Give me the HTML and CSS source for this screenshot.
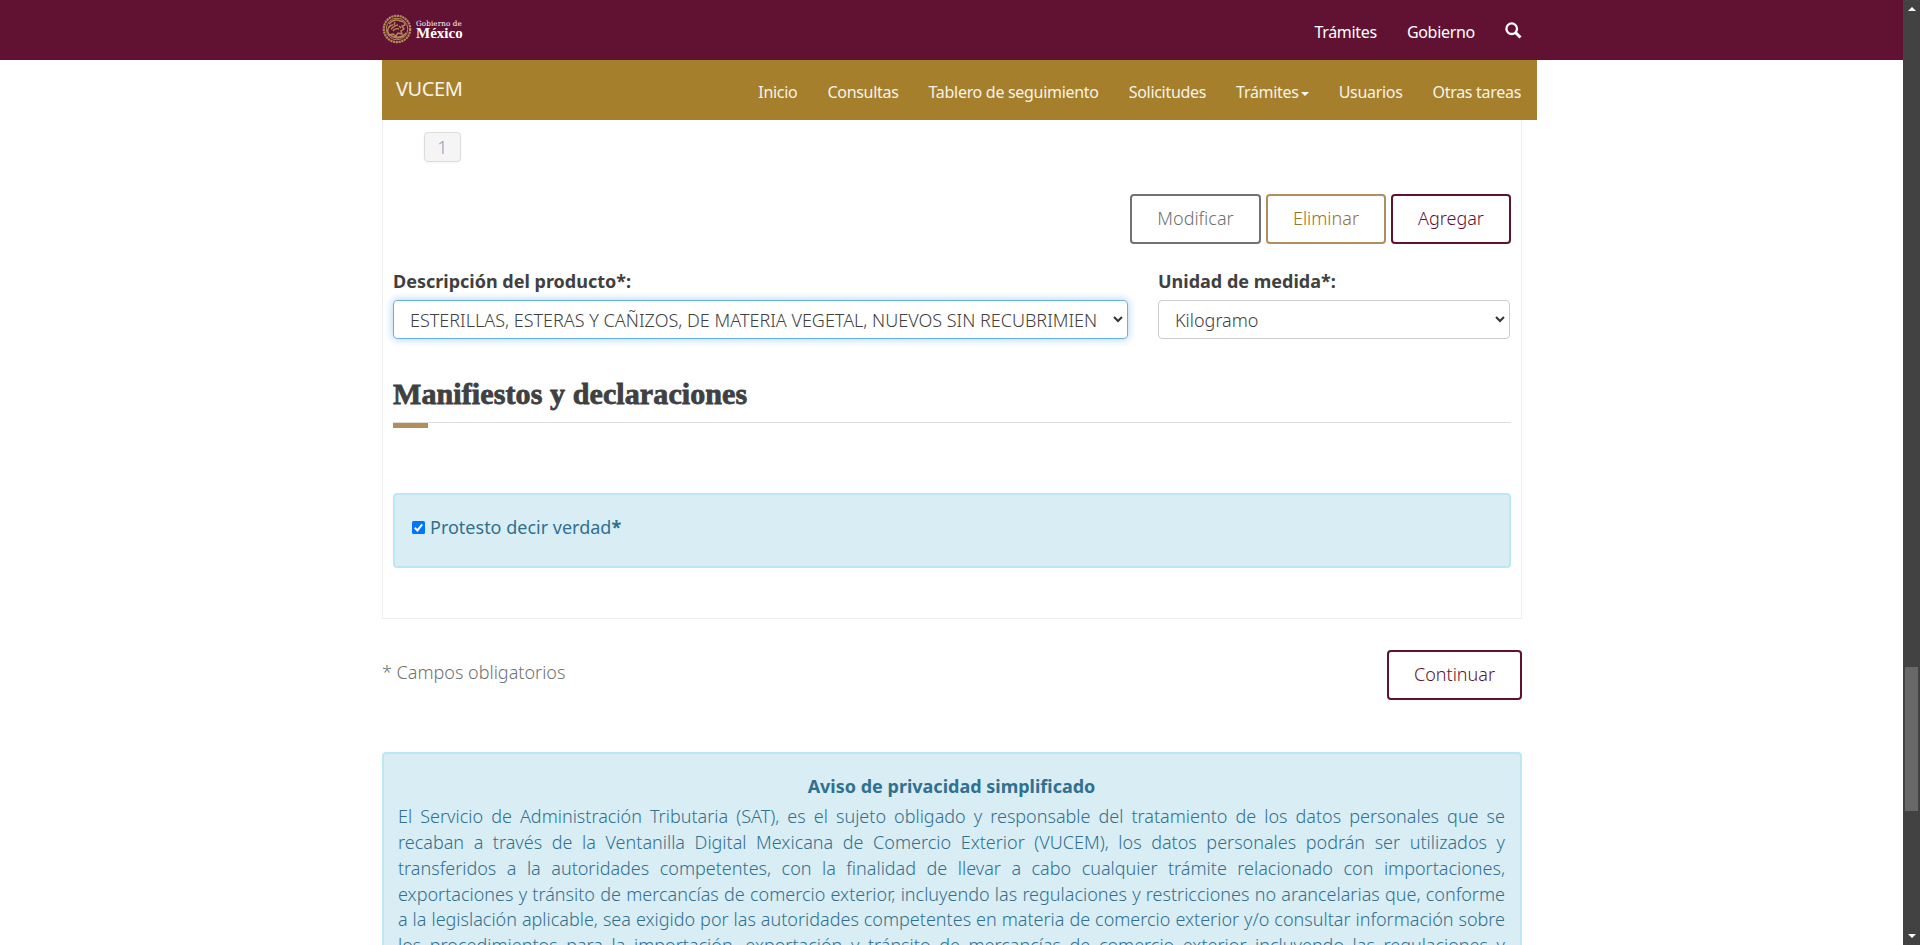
FILE: index.html
```html
<!DOCTYPE html>
<html lang="es">
<head>
<meta charset="utf-8">
<title>VUCEM</title>
<link rel="stylesheet" href="styles.css">
</head>
<body>
<div class="window">
  <div class="page">
    <header class="topbar">
      <div class="topbar-inner">
        <a class="brand">
          <svg class="seal" viewBox="0 0 30 30" width="30" height="30" fill="none" stroke="#b28b57">
            <circle cx="15" cy="15" r="13.2" stroke-width="2.2" stroke-dasharray="2.2 .6"/>
            <circle cx="15" cy="15" r="10.8" stroke-width="1"/>
            <path d="M7 10c3-4 8-5 11-3 3 0 5 2 5 4l-3 1 2 3-3 2 1 3-4-1-2 3-3-2-4 1c-1-2-2-4-1-6 1-3 3-4 5-4M9 15c2-1 3-4 7-4M11 17c1-2 4-3 6-2M7 20c4 4 12 5 17-1M9 22c4 2.500 9 2.500 13 0M13 8l-1 3M17 12l2 2" stroke-width="1.4"/>
          </svg>
          <span class="brand-text"><span class="brand-small">Gobierno de</span><span class="brand-big">México</span></span>
        </a>
        <nav class="topnav">
          <a>Trámites</a><a>Gobierno</a>
          <svg class="search" viewBox="0 0 17 17" width="17" height="17" fill="none" stroke="#fff"><circle cx="6.7" cy="6.7" r="5.3" stroke-width="2.3"/><path d="M10.5 10.5l5 5" stroke-width="3"/></svg>
        </nav>
      </div>
    </header>
    <nav class="subbar">
      <a class="subbrand">VUCEM</a>
      <div class="menu"><a>Inicio</a><a>Consultas</a><a>Tablero de seguimiento</a><a>Solicitudes</a><a>Trámites<i class="caret"></i></a><a>Usuarios</a><a>Otras tareas</a></div>
    </nav>
    <main class="container">
      <section class="panel">
        <a class="page-number">1</a>
        <div class="actions">
          <button class="btn btn-grey">Modificar</button>
          <button class="btn btn-gold">Eliminar</button>
          <button class="btn btn-wine">Agregar</button>
        </div>
        <div class="fields">
          <div class="field field-wide">
            <label>Descripción del producto*:</label>
            <div class="select focused"><span class="value value-long">ESTERILLAS, ESTERAS Y CAÑIZOS, DE MATERIA VEGETAL, NUEVOS SIN RECUBRIMIEN</span><svg class="chev" viewBox="0 0 10 7" width="10" height="7"><path d="M1 1l4 4 4-4" fill="none" stroke="#333" stroke-width="2"/></svg></div>
          </div>
          <div class="field">
            <label>Unidad de medida*:</label>
            <div class="select"><span class="value">Kilogramo</span><svg class="chev" viewBox="0 0 10 7" width="10" height="7"><path d="M1 1l4 4 4-4" fill="none" stroke="#333" stroke-width="2"/></svg></div>
          </div>
        </div>
        <h3 class="heading"><span>Manifiestos y declaraciones</span></h3>
        <div class="accent"></div>
        <div class="alert oath">
          <svg class="check" viewBox="0 0 13 13" width="13" height="13"><rect width="13" height="13" rx="1.5" fill="#0075ff"/><path d="M2.8 6.8l2.6 2.6 4.8-6" fill="none" stroke="#fff" stroke-width="2"/></svg>
          <span class="oath-text">Protesto decir verdad<b>*</b></span>
        </div>
      </section>
      <div class="footer-row">
        <span class="required">* Campos obligatorios</span>
        <button class="btn btn-wine btn-next">Continuar</button>
      </div>
      <section class="alert privacy">
        <h4>Aviso de privacidad simplificado</h4>
        <p>El Servicio de Administración Tributaria (SAT), es el sujeto obligado y responsable del tratamiento de los datos personales que se</p>
        <p>recaban a través de la Ventanilla Digital Mexicana de Comercio Exterior (VUCEM), los datos personales podrán ser utilizados y</p>
        <p>transferidos a la autoridades competentes, con la finalidad de llevar a cabo cualquier trámite relacionado con importaciones,</p>
        <p>exportaciones y tránsito de mercancías de comercio exterior, incluyendo las regulaciones y restricciones no arancelarias que, conforme</p>
        <p>a la legislación aplicable, sea exigido por las autoridades competentes en materia de comercio exterior y/o consultar información sobre</p>
        <p>los procedimientos para la importación, exportación y tránsito de mercancías de comercio exterior incluyendo las regulaciones y</p>
      </section>
    </main>
  </div>
  <aside class="scrollbar">
    <i class="arrow-up"></i><i class="thumb"></i><i class="arrow-down"></i>
  </aside>
</div>
</body>
</html>
```
FILE: styles.css
```css
* { box-sizing: border-box; }
body { margin: 0; background: #fff; color: #404041; font: 300 18px/1.428571 "Noto Sans", "Open Sans", sans-serif; }
.window { display: flex; height: 945px; overflow: hidden; }
.page { flex: 1; min-width: 0; height: 945px; overflow: hidden; }
.topbar { height: 60px; background: #611232; }
.topbar-inner { width: 1140px; height: 60px; margin-left: 382px; display: flex; justify-content: space-between; }
.brand { display: flex; gap: 4px; padding-top: 14px; color: #fff; }
.brand-text { display: flex; flex-direction: column; padding-top: 6px; font-family: "DejaVu Serif", serif; }
.brand-small { font-size: 7.2px; line-height: 8px; letter-spacing: .1px; font-weight: 400; }
.brand-big { font: 700 15px/11px "Liberation Serif", serif; }
.topnav { display: flex; gap: 30px; color: #fff; font-size: 16px; line-height: 24px; font-weight: 400; padding-top: 20px; letter-spacing: -.3px; }
.search { margin-top: 2px; }
.subbar { width: 1155px; height: 60px; margin-left: 382px; padding: 0 16px 0 14px; background: #a57f2c; color: #f8f3e8; display: flex; justify-content: space-between; }
.subbrand { font-size: 20px; line-height: 28px; padding-top: 15px; font-weight: 400; letter-spacing: -.4px; }
.menu { display: flex; gap: 30px; font-size: 16px; line-height: 24px; padding-top: 20px; font-weight: 400; letter-spacing: -.3px; white-space: nowrap; }
.caret { display: inline-block; border: 4px solid transparent; border-top-color: #fff; border-bottom: 0; margin-left: 2px; vertical-align: 2px; }
.container { width: 1140px; margin-left: 382px; }
.panel { height: 499px; border: 1px solid #eee; border-top: 0; padding: 12px 10px 0; display: flex; flex-direction: column; }
.page-number { width: 37px; height: 30px; margin-left: 31px; border: 1px solid #ddd; border-radius: 4px; background: #f5f5f5; color: #7f9cc8; text-align: center; line-height: 29px; box-shadow: 0 1px 3px #0000000c; }
.actions { display: flex; justify-content: flex-end; gap: 5px; margin-top: 32px; }
.btn { width: 120px; height: 50px; border: 2px solid; border-radius: 4px; background: #fff; font: inherit; padding: 0; }
.btn-grey { width: 131px; border-color: #6f7271; color: #6f7271; }
.btn-gold { border-color: #b38e5d; color: #977230; }
.btn-wine { border-color: #611232; color: #611232; }
.btn-next { width: 135px; }
.fields { display: flex; gap: 30px; margin-top: 24px; }
.field { width: 352px; }
.field-wide { width: 735px; }
.field label { display: block; font-weight: 700; line-height: 26px; height: 32px; }
.select { height: 39px; border: 1px solid #ccc; border-radius: 4px; display: flex; justify-content: space-between; align-items: center; padding: 0 4px 0 16px; white-space: nowrap; }
.value { padding-top: 2px; }
.focused { border-color: #66afe9; box-shadow: 0 0 8px #66afe999; }
.heading { margin: 0; margin-top: 33px; height: 51px; border-bottom: 1px solid #ddd; font: 700 30px/44px "Liberation Serif", serif; letter-spacing: .1px; -webkit-text-stroke: .8px #404041; white-space: nowrap; }
.accent { width: 35px; height: 5px; background: #b38e5d; }
.alert { background: #d9edf5; border: 2px solid #bce8f1; border-radius: 4px; color: #31708f; }
.oath { height: 75px; margin-top: 65px; padding: 19px 17px; display: flex; gap: 5px; align-items: flex-start; }
.check { margin-top: 7px; }
.oath-text { font-weight: 400; line-height: 26px; }
.footer-row { display: flex; justify-content: space-between; margin-top: 31px; }
.required { color: #6f7271; padding-top: 10px; }
.privacy { height: 220px; margin-top: 52px; padding: 20px 15px 0 14px; }
.privacy h4 { margin: 0 0 5.4px; font-size: 18px; line-height: 25px; text-align: center; }
.privacy p { margin: 0; text-align-last: justify; white-space: nowrap; }
.scrollbar { width: 17px; background: #424242; display: flex; flex-direction: column; align-items: center; justify-content: space-between; padding: 7px 0; position: relative; }
.arrow-up { border: 4px solid transparent; border-bottom-color: #fff; border-top: 0; }
.arrow-down { border: 4px solid transparent; border-top-color: #fff; border-bottom: 0; }
.thumb { width: 13px; height: 144px; background: #686868; position: absolute; top: 667px; left: 2px; }
```
